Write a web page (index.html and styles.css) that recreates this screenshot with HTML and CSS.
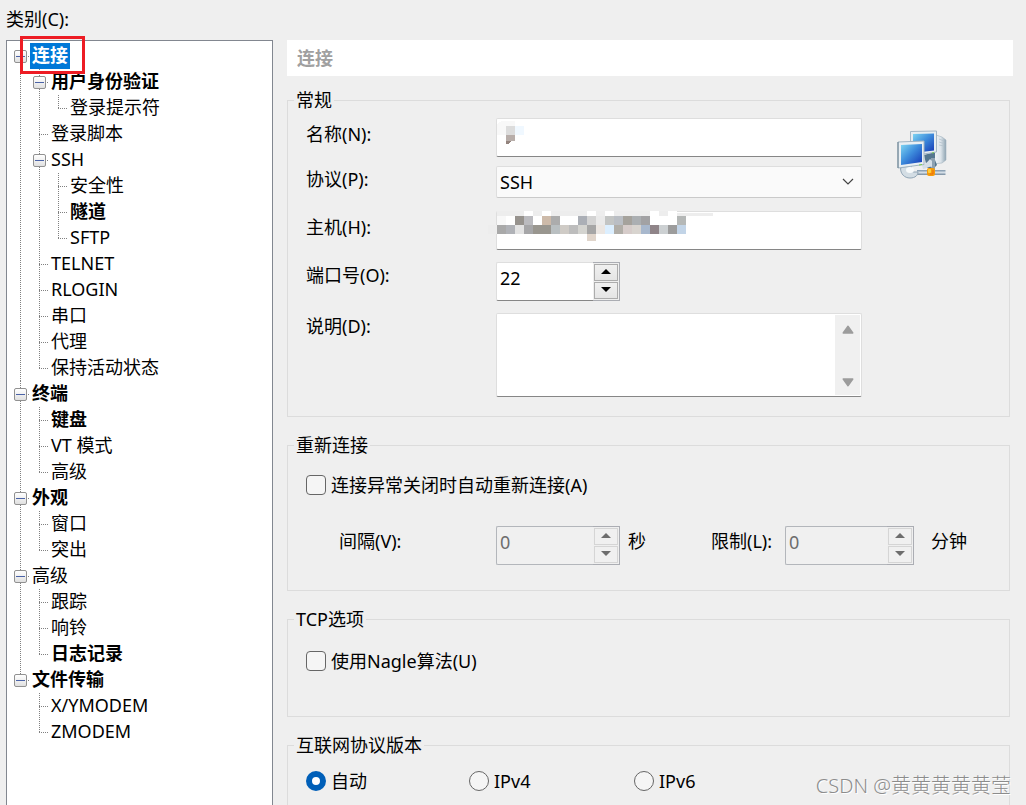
FILE: index.html
```
<!DOCTYPE html>
<html lang="zh-CN">
<head>
<meta charset="utf-8">
<title>连接</title>
<link rel="stylesheet" href="styles.css">
</head>
<body>
<div class="dialog">
  <nav class="sidebar">
    <div class="sidebar-title" id="cat">类别(C):</div>
    <ul class="tree" aria-labelledby="cat">
      <li>
        <div class="row marked"><button class="toggle" aria-label="折叠"></button><span class="label bold selected">连接</span></div>
        <ul>
          <li>
            <div class="row"><button class="toggle" aria-label="折叠"></button><span class="label bold">用户身份验证</span></div>
            <ul>
              <li><div class="row leaf"><span class="label">登录提示符</span></div></li>
            </ul>
          </li>
          <li><div class="row leaf"><span class="label">登录脚本</span></div></li>
          <li>
            <div class="row"><button class="toggle" aria-label="折叠"></button><span class="label">SSH</span></div>
            <ul>
              <li><div class="row leaf"><span class="label">安全性</span></div></li>
              <li><div class="row leaf"><span class="label bold">隧道</span></div></li>
              <li><div class="row leaf"><span class="label">SFTP</span></div></li>
            </ul>
          </li>
          <li><div class="row leaf"><span class="label">TELNET</span></div></li>
          <li><div class="row leaf"><span class="label">RLOGIN</span></div></li>
          <li><div class="row leaf"><span class="label">串口</span></div></li>
          <li><div class="row leaf"><span class="label">代理</span></div></li>
          <li><div class="row leaf"><span class="label">保持活动状态</span></div></li>
        </ul>
      </li>
      <li>
        <div class="row"><button class="toggle" aria-label="折叠"></button><span class="label bold">终端</span></div>
        <ul>
          <li><div class="row leaf"><span class="label bold">键盘</span></div></li>
          <li><div class="row leaf"><span class="label">VT 模式</span></div></li>
          <li><div class="row leaf"><span class="label">高级</span></div></li>
        </ul>
      </li>
      <li>
        <div class="row"><button class="toggle" aria-label="折叠"></button><span class="label bold">外观</span></div>
        <ul>
          <li><div class="row leaf"><span class="label">窗口</span></div></li>
          <li><div class="row leaf"><span class="label">突出</span></div></li>
        </ul>
      </li>
      <li>
        <div class="row"><button class="toggle" aria-label="折叠"></button><span class="label">高级</span></div>
        <ul>
          <li><div class="row leaf"><span class="label">跟踪</span></div></li>
          <li><div class="row leaf"><span class="label">响铃</span></div></li>
          <li><div class="row leaf"><span class="label bold">日志记录</span></div></li>
        </ul>
      </li>
      <li>
        <div class="row"><button class="toggle" aria-label="折叠"></button><span class="label bold">文件传输</span></div>
        <ul>
          <li><div class="row leaf"><span class="label">X/YMODEM</span></div></li>
          <li><div class="row leaf"><span class="label">ZMODEM</span></div></li>
        </ul>
      </li>
    </ul>
  </nav>

  <main class="content">
    <h1 class="page-title">连接</h1>

    <fieldset class="group">
      <legend>常规</legend>
      <div class="general">
        <div class="fields">
          <div class="field roomy">
            <label for="name">名称(N):</label>
            <div class="control">
              <input class="edit" id="name" type="text">
              <svg class="mosaic" width="240" height="39" viewBox="496 118 240 39" shape-rendering="crispEdges" aria-hidden="true">
                <path fill="#f8f8f8" d="M497 124l5-3h13v5h-9v9h-9z"/>
                <path fill="#dcdcdc" d="M506 126h9v9h-9z"/>
                <path fill="#f0f8ff" d="M515 126h9v9h-9z"/>
                <path fill="#b8aeaa" d="M506 135h9v6h-9z"/>
                <path fill="#93837d" d="M506 141h5l-3 3h-2z"/>
              </svg>
            </div>
          </div>
          <div class="field close">
            <label for="proto">协议(P):</label>
            <div class="control">
              <select class="combo" id="proto"><option>SSH</option></select>
              <svg class="chevron" width="12" height="8" viewBox="0 0 12 8" aria-hidden="true"><path d="M1 1l5 5 5-5" fill="none" stroke="#444" stroke-width="1.2"/></svg>
            </div>
          </div>
          <div class="field roomy">
            <label for="host">主机(H):</label>
            <div class="control">
              <input class="edit" id="host" type="text">
              <svg class="mosaic" width="240" height="39" viewBox="496 211 240 39" shape-rendering="crispEdges" aria-hidden="true">
                <path fill="#ededed" d="M497 211h27v5h-27zM533 211h9v5h-9zM551 211h36v5h-36zM596 211h9v5h-9zM614 211h36v5h-36zM659 211h9v5h-9zM677 213h36v3h-36zM488 225h9v9h-9z"/>
                <path fill="#fff" d="M524 211h9v5h-9zM542 211h9v5h-9zM587 211h9v5h-9zM605 211h9v5h-9zM650 211h9v5h-9zM668 211h9v5h-9z"/>
                <path fill="#f8f8f8" d="M497 216h9v9h-9z"/>
                <path fill="#97938e" d="M515 216h9v9h-9z"/>
                <path fill="#bbbbbf" d="M524 216h9v9h-9z"/>
                <path fill="#cdbaa9" d="M542 216h9v9h-9z"/>
                <path fill="#acacac" d="M551 216h9v9h-9z"/>
                <path fill="#abafb6" d="M578 216h9v9h-9z"/>
                <path fill="#d3d3d3" d="M587 216h9v9h-9z"/>
                <path fill="#eaeaea" d="M596 216h9v9h-9z"/>
                <path fill="#c3c5c4" d="M605 216h9v9h-9z"/>
                <path fill="#babec4" d="M614 216h9v9h-9z"/>
                <path fill="#a5a29c" d="M623 216h9v9h-9z"/>
                <path fill="#abafb2" d="M632 216h9v9h-9z"/>
                <path fill="#a2a2a4" d="M641 216h9v9h-9z"/>
                <path fill="#b5b8b7" d="M677 216h9v9h-9z"/>
                <path fill="#a9a9a9" d="M497 225h9v9h-9z"/>
                <path fill="#b0b2b7" d="M506 225h9v9h-9z"/>
                <path fill="#e3e3e3" d="M515 225h9v9h-9z"/>
                <path fill="#a6a6a8" d="M524 225h9v9h-9z"/>
                <path fill="#99968f" d="M533 225h18v9h-18z"/>
                <path fill="#b9bfc1" d="M551 225h9v9h-9z"/>
                <path fill="#cfcbc6" d="M560 225h9v9h-9z"/>
                <path fill="#bdbdbd" d="M569 225h9v9h-9z"/>
                <path fill="#d4d4d0" d="M578 225h9v9h-9z"/>
                <path fill="#a6a6a6" d="M587 225h9v9h-9z"/>
                <path fill="#ebe6e2" d="M596 225h9v9h-9z"/>
                <path fill="#dcefff" d="M605 225h9v9h-9z"/>
                <path fill="#b1aea8" d="M614 225h9v9h-9z"/>
                <path fill="#d6ccca" d="M623 225h9v9h-9z"/>
                <path fill="#d8d4cf" d="M632 225h9v9h-9z"/>
                <path fill="#a8b8cd" d="M641 225h9v9h-9z"/>
                <path fill="#8f8488" d="M650 225h9v9h-9z"/>
                <path fill="#ccd0d2" d="M659 225h9v9h-9z"/>
                <path fill="#9c9c9c" d="M668 225h9v9h-9z"/>
                <path fill="#c2d4e7" d="M677 225h9v9h-9z"/>
                <path fill="#e0d5cb" d="M587 234h9v7h-9z"/>
              </svg>
            </div>
          </div>
          <div class="field">
            <label for="port">端口号(O):</label>
            <div class="spinner">
              <input class="edit" id="port" type="text" inputmode="numeric" value="22">
              <span class="updown">
                <button class="step" aria-label="增加"><svg width="10" height="5" viewBox="0 0 10 5"><path d="M0 5L5 0l5 5z"/></svg></button>
                <button class="step" aria-label="减少"><svg width="10" height="5" viewBox="0 0 10 5"><path d="M0 0h10L5 5z"/></svg></button>
              </span>
            </div>
          </div>
          <div class="field">
            <label for="desc">说明(D):</label>
            <div class="memo">
              <textarea id="desc"></textarea>
              <span class="scrollbar" aria-hidden="true">
                <svg width="12" height="9" viewBox="0 0 12 9"><path d="M6 1.2L10.8 8H1.2z" fill="#9c9c9c" stroke="#9c9c9c" stroke-width="1.4" stroke-linejoin="round"/></svg>
                <svg width="12" height="9" viewBox="0 0 12 9"><path d="M6 7.8L10.8 1H1.2z" fill="#9c9c9c" stroke="#9c9c9c" stroke-width="1.4" stroke-linejoin="round"/></svg>
              </span>
            </div>
          </div>
        </div>
        <svg class="net-icon" width="50" height="50" viewBox="0 0 50 50" aria-hidden="true">
          <defs>
            <linearGradient id="scr" x1="0" y1="0" x2="1" y2="1"><stop offset="0" stop-color="#7fd6f2"/><stop offset=".45" stop-color="#3f8fdd"/><stop offset="1" stop-color="#1336b4"/></linearGradient>
            <linearGradient id="tower" x1="0" y1="0" x2="1" y2="0"><stop offset="0" stop-color="#f4f7fa"/><stop offset=".6" stop-color="#dce4ea"/><stop offset="1" stop-color="#8fa4b2"/></linearGradient>
            <linearGradient id="pipe" x1="0" y1="0" x2="0" y2="1"><stop offset="0" stop-color="#7b93a8"/><stop offset=".5" stop-color="#d3dde6"/><stop offset="1" stop-color="#73899c"/></linearGradient>
          </defs>
          <path d="M39 5l6 2 4 3v20l-4 3-9 1z" fill="url(#tower)" stroke="#a3b4c0" stroke-width=".6"/>
          <path d="M42 9l5 2M42 12l5 1.500M42 15l5 1" stroke="#b5c3cd" stroke-width=".8"/>
          <path d="M27 25l11-3v8l2 5-3 3h-7z" fill="#54778f"/>
          <path d="M13.500 1.500l26-.5v21l-26 4z" fill="#e6edf1" stroke="#a5b7c5"/>
          <path d="M16 4l21-.5v17L16 23z" fill="url(#scr)"/>
          <path d="M20 40h28.500v5H20z" fill="url(#pipe)"/>
          <path d="M34 28h4v12h-4z" fill="#8ca1b2"/>
          <path d="M25 35c4-1 6-4 8-6l2 2v6c-3-1-5 2-9 2z" fill="#d5dfe7"/>
          <path d="M3.500 38c0 6 4 10 9.500 10s8-3 8-6H17c-3 0-4-3-2-7z" fill="#d3dde4" stroke="#91a5b5"/>
          <ellipse cx="13" cy="40" rx="4" ry="3" fill="#f7fafb"/>
          <path d="M1 12l26-1v23.500L1 38z" fill="#e9eff3" stroke="#a1b4c2"/>
          <path d="M1 12v26" stroke="#677e8d"/>
          <path d="M4 15l21-1v18L4 35z" fill="url(#scr)"/>
          <path d="M22 35l3-.5M35 23l2-.5" stroke="#78cf4e"/>
          <rect x="30" y="38" width="8" height="8" rx="2" fill="#f59b0a"/>
          <rect x="31" y="39" width="3" height="4" rx="1" fill="#ffcf3c"/>
          <path d="M36 40v4h-3" fill="none" stroke="#ed6c0c"/>
        </svg>
      </div>
    </fieldset>

    <fieldset class="group">
      <legend>重新连接</legend>
      <div class="reconnect">
        <label class="choice"><input class="check" type="checkbox">连接异常关闭时自动重新连接(A)</label>
        <div class="limits">
          <label for="interval">间隔(V):</label>
          <div class="spinner disabled">
            <input class="edit" id="interval" type="text" value="0" disabled>
            <span class="updown">
              <button class="step" aria-label="增加" disabled><svg width="10" height="5" viewBox="0 0 10 5"><path d="M0 5L5 0l5 5z"/></svg></button>
              <button class="step" aria-label="减少" disabled><svg width="10" height="5" viewBox="0 0 10 5"><path d="M0 0h10L5 5z"/></svg></button>
            </span>
          </div>
          <span class="unit">秒</span>
          <label for="limit">限制(L):</label>
          <div class="spinner disabled">
            <input class="edit" id="limit" type="text" value="0" disabled>
            <span class="updown">
              <button class="step" aria-label="增加" disabled><svg width="10" height="5" viewBox="0 0 10 5"><path d="M0 5L5 0l5 5z"/></svg></button>
              <button class="step" aria-label="减少" disabled><svg width="10" height="5" viewBox="0 0 10 5"><path d="M0 0h10L5 5z"/></svg></button>
            </span>
          </div>
          <span class="unit wide">分钟</span>
        </div>
      </div>
    </fieldset>

    <fieldset class="group">
      <legend>TCP选项</legend>
      <div class="tcp">
        <label class="choice"><input class="check" type="checkbox">使用Nagle算法(U)</label>
      </div>
    </fieldset>

    <fieldset class="group last">
      <legend>互联网协议版本</legend>
      <div class="versions">
        <label class="choice"><input class="radio" type="radio" name="ip" checked>自动</label>
        <label class="choice"><input class="radio" type="radio" name="ip">IPv4</label>
        <label class="choice"><input class="radio" type="radio" name="ip">IPv6</label>
      </div>
    </fieldset>
  </main>
  <div class="watermark">CSDN @黄黄黄黄黄莹</div>
</div>
</body>
</html>
```

FILE: styles.css
```
*, *::after { box-sizing: border-box; }

body {
  margin: 0;
  background: #efefef;
  color: #000;
  font: 18px/26px "Noto Sans", "Noto Sans CJK SC", sans-serif;
}

button, input, select, textarea { font: inherit; color: inherit; margin: 0; }

.dialog {
  position: relative;
  display: grid;
  grid-template-columns: 267px minmax(0, 1fr);
  gap: 14px;
  height: 100vh;
  padding: 0 13px 0 6px;
  overflow: hidden;
}

/* Category tree */
.sidebar { display: flex; flex-direction: column; min-height: 0; }
.sidebar-title { padding: 6px 0 8px; }

.tree {
  flex: 1;
  margin: 0;
  padding: 2px 0 0 4px;
  background: #fff;
  border: 1px solid #828790;
  border-bottom: 0;
  list-style: none;
}
.tree ul { margin: 0; padding: 0 0 0 19px; list-style: none; }

.tree li {
  background: repeating-linear-gradient(to bottom, #808080 0 1px, transparent 1px 2px) 9px 0 / 1px 100% no-repeat;
}
.tree li:last-child { background-size: 1px 14px; }
.tree > li:first-child { background-position: 9px 13px; }

.row {
  display: flex;
  align-items: center;
  height: 26px;
  background: repeating-linear-gradient(to right, #808080 0 1px, transparent 1px 2px) 9px 13px / 9px 1px no-repeat;
}
.row.leaf { padding-left: 19px; }

.toggle {
  flex: none;
  width: 13px;
  height: 13px;
  margin: 1px 3px 0;
  padding: 0;
  border: 1px solid #919191;
  border-radius: 2px;
  background:
    linear-gradient(#4b63a7, #4b63a7) center / 9px 1px no-repeat,
    linear-gradient(#fff, #e0e0e0);
}

.label { padding: 0 2px 2px; line-height: 24px; white-space: nowrap; }
.bold { font-weight: 700; }
.selected { background: #0078d7; color: #fff; }

.marked { position: relative; }
.marked::after {
  content: "";
  position: absolute;
  left: 9px;
  top: -7px;
  width: 65px;
  height: 38px;
  border: 3px solid #ed1c24;
}

/* Settings page */
.content {
  display: flex;
  flex-direction: column;
  gap: 15px;
  min-height: 0;
  padding-top: 40px;
}

.page-title {
  margin: 0 0 -4px;
  padding: 5px 10px;
  background: #fff;
  color: #a0a0a0;
  font-size: 18px;
  font-weight: 700;
}

.group {
  flex: none;
  min-width: 0;
  margin: 0 3px 0 0;
  padding: 0 0 0 6px;
  border: 1px solid #dcdcdc;
}
.group.last { flex: 1; border-bottom: 0; }
.group legend { padding: 0 2px; }

.general { display: flex; padding: 5px 0 19px 12px; }
.fields { flex: 1; min-width: 0; }
.net-icon { flex: none; margin: 12px 62px 0 35px; }

.field {
  display: grid;
  grid-template-columns: 190px minmax(0, 1fr);
  align-items: start;
  margin-top: 12px;
}
.field.roomy { margin-top: 13px; }
.field.close { margin-top: 9px; }
.field:first-child { margin-top: 0; }
.field.roomy label { padding-top: 3px; }

.control { position: relative; display: flex; }

.edit {
  width: 100%;
  min-width: 0;
  height: 39px;
  padding: 0 3px 8px;
  background: #fff;
  border: 1px solid #dedede;
  border-bottom-color: #868686;
  border-radius: 2px;
}

.mosaic { position: absolute; left: 0; top: 0; overflow: visible; pointer-events: none; }

.combo {
  width: 100%;
  height: 32px;
  padding: 0 3px;
  background: #fafafa;
  border: 1px solid #dedede;
  border-bottom-color: #cacaca;
  border-radius: 2px;
  appearance: none;
}
.chevron { position: absolute; right: 8px; top: 12px; pointer-events: none; }

.spinner { display: flex; width: 124px; }
.spinner .edit { border-right: 0; border-radius: 2px 0 0 2px; }

.updown {
  flex: none;
  display: grid;
  gap: 1px;
  width: 27px;
  padding: 1px;
  border: 1px solid #abadb3;
  border-left: 0;
}
.step {
  display: flex;
  align-items: center;
  justify-content: center;
  padding: 0 0 3px;
  background: linear-gradient(#f0f0f0, #e5e5e5);
  border: 1px solid #acacac;
}

.spinner.disabled { width: auto; color: #6d6d6d; }
.disabled .edit { background: #f0f0f0; border-color: #b3b6bb; }
.disabled .step { background: #f0f0f0; border-color: #d5d5d5; fill: #6d6d6d; }

.memo {
  display: flex;
  height: 84px;
  padding: 1px;
  background: #fff;
  border: 1px solid #dedede;
  border-bottom-color: #868686;
  border-radius: 2px;
}
.memo textarea {
  flex: 1;
  min-width: 0;
  padding: 0 3px;
  background: none;
  border: 0;
  outline: 0;
  resize: none;
}
.scrollbar {
  display: flex;
  flex-direction: column;
  align-items: center;
  justify-content: space-between;
  width: 25px;
  padding: 10px 0 8px;
  background: #f0f0f0;
}

.choice { display: flex; align-items: center; gap: 5px; }

.check, .radio {
  appearance: none;
  flex: none;
  width: 20px;
  height: 20px;
  background: #f5f5f5;
  border: 1px solid #666;
  border-radius: 4px;
}
.radio { border-radius: 50%; }
.radio:checked { background: #fff; border: 6px solid #005fb8; }

.reconnect { padding: 14px 0 25px 12px; }
.limits {
  display: grid;
  grid-template-columns: 157px 124px 91px 74px 129px 1fr;
  align-items: start;
  padding: 28px 0 0 33px;
}
.limits label, .unit { padding-top: 2px; }
.unit { padding-left: 8px; }
.unit.wide { padding-left: 17px; }

.tcp { padding: 16px 0 42px 12px; }

.versions {
  display: grid;
  grid-template-columns: 163px 165px 1fr;
  padding: 10px 0 0 12px;
}

.watermark {
  position: absolute;
  right: 15px;
  bottom: 6px;
  color: #8c8c8c;
  font-size: 20px;
  font-weight: 300;
  text-shadow: 1px 1px 0 #fff;
}
```
